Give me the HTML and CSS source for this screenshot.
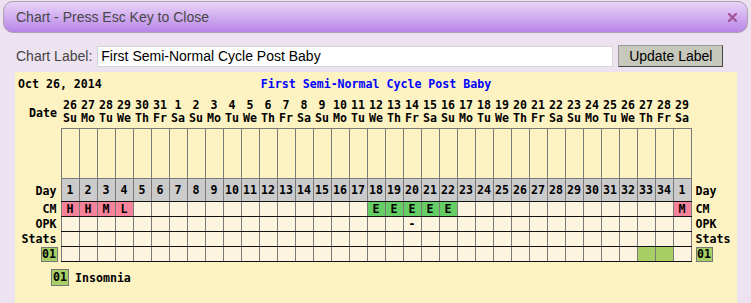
FILE: index.html
```html
<!DOCTYPE html>
<html lang="en">
<head>
    <meta charset="UTF-8">
    <meta name="viewport" content="width=device-width, initial-scale=1.0">
    <title>Chart</title>
    <link rel="stylesheet" href="styles.css">
</head>
<body>
    <div class="titlebar">
        <span class="title">Chart - Press Esc Key to Close</span>
        <span class="close">
            <svg width="9" height="9" viewBox="0 0 9 9"><path d="M1 1 L8 8 M8 1 L1 8" stroke="#a4569c" stroke-width="2.4" stroke-linecap="square"/></svg>
        </span>
    </div>

    <div class="label-row">
        <label class="label-text">Chart Label:</label>
        <input class="label-input" type="text" value="First Semi-Normal Cycle Post Baby">
        <button class="update-btn">Update Label</button>
    </div>

    <div class="panel">
        <div class="panel-head">
            <span class="start-date">Oct 26, 2014</span>
            <span class="chart-title">First Semi-Normal Cycle Post Baby</span>
            <span></span>
        </div>
        <table class="chart" id="chart"></table>
        <div class="legend">
            <span class="badge">01</span>
            <span class="legend-text">Insomnia</span>
        </div>
    </div>

    <script>
        const chart = document.getElementById('chart');
        const days = ['Su', 'Mo', 'Tu', 'We', 'Th', 'Fr', 'Sa'];
        const total = 35;
        const cm = { 1: ['H', 'pink'], 2: ['H', 'pink'], 3: ['M', 'pink'], 4: ['L', 'pink'],
                     18: ['E', 'green'], 19: ['E', 'green'], 20: ['E', 'green'], 21: ['E', 'green'], 22: ['E', 'green'],
                     35: ['M', 'pink'] };
        const opk = { 20: '-' };
        const stats = { 33: 'lime', 34: 'lime' };

        function row(cls, left, right, cellFn) {
            let html = `<tr class="${cls}"><th class="left">${left}</th>`;
            for (let i = 1; i <= total; i++) {
                html += cellFn(i);
            }
            html += `<th class="right">${right}</th></tr>`;
            return html;
        }

        let html = '<colgroup><col class="lab">';
        for (let i = 0; i < total; i++) html += '<col class="dc">';
        html += '<col class="lab"></colgroup>';

        const start = new Date(2014, 9, 26);
        html += row('date-row', 'Date', '', i => {
            const d = new Date(start);
            d.setDate(start.getDate() + i - 1);
            return `<td>${d.getDate()}<br>${days[d.getDay()]}</td>`;
        });
        html += row('plot-row', '', '', () => '<td></td>');
        html += row('day-row', 'Day', 'Day', i => `<td>${i <= 34 ? i : 1}</td>`);
        html += row('data-row', 'CM', 'CM', i => cm[i] ? `<td class="${cm[i][1]}">${cm[i][0]}</td>` : '<td></td>');
        html += row('data-row', 'OPK', 'OPK', i => `<td>${opk[i] || ''}</td>`);
        html += row('data-row', 'Stats', 'Stats', () => '<td></td>');
        html += row('data-row', '<span class="badge">01</span>', '<span class="badge">01</span>',
            i => stats[i] ? `<td class="${stats[i]}"></td>` : '<td></td>');

        chart.innerHTML = html;
    </script>
</body>
</html>
```

FILE: styles.css
```css
body {
    margin: 0;
    padding: 0;
    background-color: #ede2ef;
    font-family: 'Liberation Sans', Arial, sans-serif;
    overflow: hidden;
}

.titlebar {
    margin: 1px 3px 0 3px;
    height: 30px;
    border: 1px solid #a9a1ad;
    border-radius: 10px;
    background: linear-gradient(#ead5f8, #b885e7);
    display: flex;
    align-items: center;
    justify-content: space-between;
    padding: 0 10px 0 12px;
}

.title {
    font-size: 14px;
    color: #474747;
}

.close {
    display: flex;
    padding-top: 1px;
}

.label-row {
    display: flex;
    align-items: center;
    margin-top: 12px;
    padding-left: 16px;
    height: 22px;
}

.label-text {
    font-size: 14px;
    color: #444;
}

.label-input {
    margin-left: 5px;
    width: 516px;
    height: 21px;
    box-sizing: border-box;
    border: 1px solid #d6d6d6;
    background-color: white;
    padding: 0 3px;
    font-family: 'Liberation Sans', Arial, sans-serif;
    font-size: 14px;
    color: black;
}

.update-btn {
    margin-left: 5px;
    width: 105px;
    height: 22px;
    box-sizing: border-box;
    background-color: #c6c8bc;
    border: 1px solid #999;
    border-right-color: #444;
    border-bottom-color: #444;
    font-family: 'Liberation Sans', Arial, sans-serif;
    font-size: 14px;
    color: black;
    padding: 0;
}

.panel {
    margin: 5px 0 0 15px;
    width: 722px;
    height: 240px;
    background-color: #fdf3c2;
    font-family: 'DejaVu Sans Mono', monospace;
    font-weight: bold;
    font-size: 11.6px;
    color: black;
}

.panel-head {
    display: grid;
    grid-template-columns: 1fr auto 1fr;
    padding: 5px 3px 0 3px;
    height: 15px;
}

.chart-title {
    color: #0000ff;
}

.chart {
    border-collapse: collapse;
    table-layout: fixed;
    width: 722px;
}

.chart col.lab {
    width: 46px;
}

.chart col.dc {
    width: 18px;
}

.chart th {
    font-weight: bold;
    padding: 0;
    white-space: nowrap;
}

.chart th.left {
    text-align: right;
    padding-right: 4px;
}

.chart th.right {
    text-align: left;
    padding-left: 4px;
}

.chart td {
    padding: 0;
    text-align: center;
    line-height: 13px;
}

.date-row td {
    height: 33px;
    vertical-align: bottom;
    padding-bottom: 3px;
}

.date-row th {
    vertical-align: bottom;
    padding-bottom: 9px;
}

.plot-row td {
    height: 49px;
    border-left: 1px solid #7a7a7a;
    border-right: 1px solid #7a7a7a;
    border-top: 1px solid #7a7a7a;
}

.day-row td {
    height: 22px;
    background-color: #cbcbcb;
    border: 1px solid #7a7a7a;
    border-bottom: 1px solid #111;
}

.day-row th {
    padding-top: 2px;
}

.data-row td {
    height: 14px;
    background-color: #fdf4df;
    border-left: 1px solid #7a7a7a;
    border-right: 1px solid #7a7a7a;
    border-bottom: 1px solid #111;
}

.data-row th {
    height: 14px;
    line-height: 13px;
}

.chart td.pink {
    background-color: #f7839a;
}

.chart td.green {
    background-color: #66cc66;
}

.chart td.lime {
    background-color: #a8cf66;
}

.badge {
    display: inline-block;
    width: 15px;
    height: 13px;
    line-height: 13px;
    text-align: center;
    background-color: #a8cf66;
    border: 1px solid #777;
}

.chart th.left .badge {
    margin-right: -1px;
}

.legend {
    display: flex;
    align-items: center;
    margin: 7px 0 0 36px;
}

.legend .badge {
    width: 16px;
    height: 15px;
    line-height: 15px;
}

.legend-text {
    margin-left: 6px;
}
```
